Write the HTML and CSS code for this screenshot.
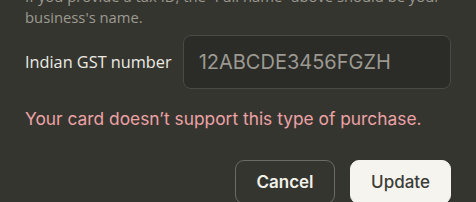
FILE: index.html
```html
<!DOCTYPE html>
<html>
<head>
<meta charset="utf-8">
<link rel="stylesheet" href="styles.css">
</head>
<body>
<div class="dialog">
  <p class="help">If you provide a tax ID, the “Full name” above should be your<br>business's name.</p>
  <div class="field">
    <label class="label" for="gst">Indian GST number</label>
    <div class="input" id="gst">12ABCDE3456FGZH</div>
  </div>
  <p class="error">Your card doesn’t support this type of purchase.</p>
  <div class="actions">
    <button class="btn btn-cancel">Cancel</button>
    <button class="btn btn-update">Update</button>
  </div>
</div>
</body>
</html>
```
FILE: styles.css
```css
html, body {
  margin: 0;
  padding: 0;
  background: #35352f;
  overflow: hidden;
}
.dialog {
  padding: 0 25px 0 25px;
  display: flex;
  flex-direction: column;
  font-family: "Open Sans", "Noto Sans", sans-serif;
}
.help {
  margin: -14px 0 0 0;
  font-size: 14.8px;
  line-height: 21px;
  color: #9c9a91;
  white-space: nowrap;
}
.field {
  display: flex;
  align-items: center;
  gap: 11px;
  margin-top: 7px;
}
.label {
  font-size: 16.3px;
  color: #ecebe4;
  white-space: nowrap;
}
.input {
  flex: 1;
  box-sizing: border-box;
  height: 54px;
  border: 1px solid #4a4a44;
  border-radius: 8px;
  background: #2b2b28;
  color: #9b9991;
  font-family: Inter, "Liberation Sans", sans-serif;
  font-size: 20px;
  display: flex;
  align-items: center;
  padding-left: 15px;
}
.error {
  margin: 18px 0 0 0;
  font-family: Inter, "Liberation Sans", sans-serif;
  font-size: 17.35px;
  line-height: 24px;
  color: #eca2a6;
}
.actions {
  display: flex;
  justify-content: flex-end;
  gap: 15px;
  margin-top: 29px;
}
.btn {
  height: 44px;
  width: 100px;
  border-radius: 9px;
  font-family: Inter, "Liberation Sans", sans-serif;
  font-size: 17px;
  cursor: pointer;
}
.btn-cancel {
  background: transparent;
  border: 1px solid #6b6a64;
  color: #f2f1ea;
  font-weight: 600;
}
.btn-update {
  width: 101px;
  background: #f5f4ef;
  border: 1px solid #f5f4ef;
  color: #3d3d38;
  font-weight: 500;
}
```
